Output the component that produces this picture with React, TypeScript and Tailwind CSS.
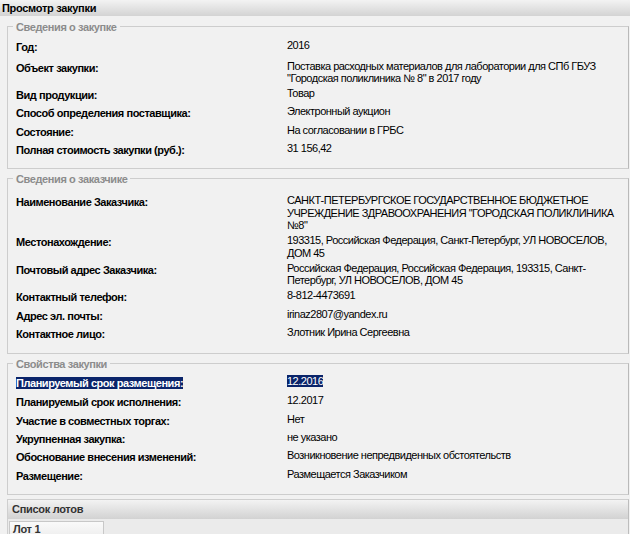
import React from "react";

type Row = { label: string; lines: string[]; h: number; selected?: boolean };

const purchase: Row[] = [
  { label: "Год:", lines: ["2016"], h: 20.6 },
  {
    label: "Объект закупки:",
    lines: [
      "Поставка расходных материалов для лаборатории для СПб ГБУЗ",
      "\"Городская поликлиника № 8\" в 2017 году",
    ],
    h: 27.7,
  },
  { label: "Вид продукции:", lines: ["Товар"], h: 18.2 },
  { label: "Способ определения поставщика:", lines: ["Электронный аукцион"], h: 18.2 },
  { label: "Состояние:", lines: ["На согласовании в ГРБС"], h: 18.2 },
  { label: "Полная стоимость закупки (руб.):", lines: ["31 156,42"], h: 18.3 },
];

const customer: Row[] = [
  {
    label: "Наименование Заказчика:",
    lines: [
      "САНКТ-ПЕТЕРБУРГСКОЕ ГОСУДАРСТВЕННОЕ БЮДЖЕТНОЕ",
      "УЧРЕЖДЕНИЕ ЗДРАВООХРАНЕНИЯ \"ГОРОДСКАЯ ПОЛИКЛИНИКА",
      "№8\"",
    ],
    h: 40,
  },
  {
    label: "Местонахождение:",
    lines: ["193315, Российская Федерация, Санкт-Петербург, УЛ НОВОСЕЛОВ,", "ДОМ 45"],
    h: 27.7,
  },
  {
    label: "Почтовый адрес Заказчика:",
    lines: [
      "Российская Федерация, Российская Федерация, 193315, Санкт-",
      "Петербург, УЛ НОВОСЕЛОВ, ДОМ 45",
    ],
    h: 27.3,
  },
  { label: "Контактный телефон:", lines: ["8-812-4473691"], h: 18.4 },
  { label: "Адрес эл. почты:", lines: ["irinaz2807@yandex.ru"], h: 18.3 },
  { label: "Контактное лицо:", lines: ["Злотник Ирина Сергеевна"], h: 18.3 },
];

const props: Row[] = [
  { label: "Планируемый срок размещения:", lines: ["12.2016"], h: 18.4, selected: true },
  { label: "Планируемый срок исполнения:", lines: ["12.2017"], h: 19 },
  { label: "Участие в совместных торгах:", lines: ["Нет"], h: 18.3 },
  { label: "Укрупненная закупка:", lines: ["не указано"], h: 18.3 },
  { label: "Обоснование внесения изменений:", lines: ["Возникновение непредвиденных обстоятельств"], h: 18.7 },
  { label: "Размещение:", lines: ["Размещается Заказчиком"], h: 18.3 },
];

function Group({ title, rows, className }: { title: string; rows: Row[]; className: string }) {
  return (
    <div
      className={`relative ml-[7px] w-[622px] border border-[#cdcdcd] border-r-[#b9b9b9] pl-[8px] ${className}`}
    >
      <span className="absolute left-[5px] top-[-6px] bg-[#f1f1f1] px-[3px] font-bold leading-[13px] tracking-[-0.4px] text-[#8c8c8c]">
        {title}
      </span>
      <div className="flex flex-col">
        {rows.map((r) => (
          <div key={r.label} className="flex items-start" style={{ height: r.h }}>
            <div className="w-[271px] shrink-0 pt-[3px] font-bold leading-[13px] tracking-[-0.45px]">
              <span className={r.selected ? "bg-[#0a246a] text-white" : ""}>{r.label}</span>
            </div>
            <div className="whitespace-nowrap pt-[1px] leading-[12.5px] tracking-[-0.5px]">
              {r.lines.map((l, i) => (
                <div key={i}>
                  <span className={r.selected ? "bg-[#0a246a] text-white" : ""}>{l}</span>
                </div>
              ))}
            </div>
          </div>
        ))}
      </div>
    </div>
  );
}

export default function App() {
  return (
    <div className="h-[534px] w-[630px] overflow-hidden bg-[#f1f1f1] font-['Tahoma','Liberation_Sans',sans-serif] text-[11px] text-black">
      <div className="h-[16px] bg-gradient-to-b from-[#f3f3f3] to-[#d3d3d3] pl-[2px] font-bold leading-[16px] tracking-[-0.3px]">
        Просмотр закупки
      </div>
      <Group title="Сведения о закупке" rows={purchase} className="mt-[10px] pt-[11px] pb-[9px]" />
      <Group title="Сведения о заказчике" rows={customer} className="mt-[9px] pt-[14px] pb-[10px]" />
      <Group title="Свойства закупки" rows={props} className="mt-[9px] pt-[10px] pb-[9px]" />
      <div className="ml-[7px] mt-[4px] w-[622px] border border-[#cfcfcf] border-r-[#bdbdbd]">
        <div className="h-[19px] bg-gradient-to-b from-[#f3f3f3] to-[#d2d2d2] pl-[4px] font-bold leading-[19px] tracking-[-0.3px] text-[#333]">
          Список лотов
        </div>
        <div className="h-[20px] bg-[#ebebeb] pl-[1px] pt-[2px]">
          <div className="h-[18px] w-[95px] border border-b-0 border-[#c8c8c8] bg-gradient-to-b from-[#fafafa] to-[#ececec] pl-[3px] font-bold leading-[15px] tracking-[-0.3px] text-[#333]">
            Лот 1
          </div>
        </div>
      </div>
    </div>
  );
}
